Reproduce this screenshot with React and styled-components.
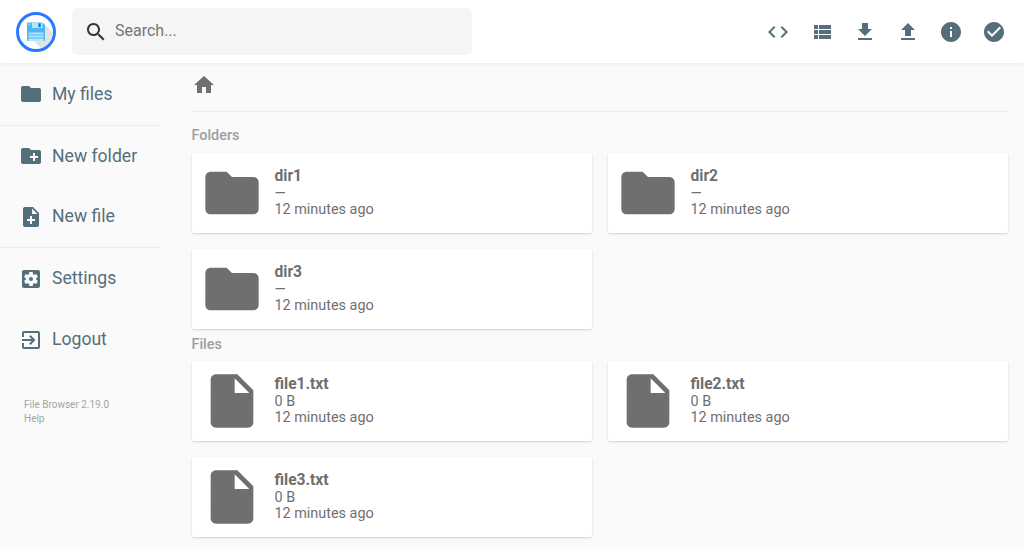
import React from "react";
import styled, { createGlobalStyle } from "styled-components";

const Global = createGlobalStyle`
  html, body { margin: 0; padding: 0; background: #fafafa; overflow: hidden; }
  body { font-family: Roboto, "Noto Sans", sans-serif; color: #546e7a; }
  * { box-sizing: border-box; }
`;

const P = {
  folder: "M10 4H4c-1.1 0-1.99.9-1.99 2L2 18c0 1.1.9 2 2 2h16c1.1 0 2-.9 2-2V8c0-1.1-.9-2-2-2h-8l-2-2z",
  file: "M6 2c-1.1 0-1.99.9-1.99 2L4 20c0 1.1.89 2 1.99 2H18c1.1 0 2-.9 2-2V8l-6-6H6zm7 7V3.5L18.5 9H13z",
  newFolder: "M20 6h-8l-2-2H4c-1.11 0-1.99.89-1.99 2L2 18c0 1.11.89 2 2 2h16c1.11 0 2-.89 2-2V8c0-1.11-.89-2-2-2zm-1 8h-3v3h-2v-3h-3v-2h3V9h2v3h3v2z",
  newFile: "M14 2H6c-1.1 0-1.99.9-1.99 2L4 20c0 1.1.89 2 1.99 2H18c1.1 0 2-.9 2-2V8l-6-6zm2 14h-3v3h-2v-3H8v-2h3v-3h2v3h3v2zm-3-7V3.5L18.5 9H13z",
  settings: "M12 10c-1.1 0-2 .9-2 2s.9 2 2 2 2-.9 2-2-.9-2-2-2zm7-7H5c-1.11 0-2 .9-2 2v14c0 1.1.89 2 2 2h14c1.11 0 2-.9 2-2V5c0-1.1-.89-2-2-2zm-1.75 9c0 .23-.02.46-.05.68l1.48 1.16c.13.11.17.3.08.45l-1.4 2.42c-.09.15-.27.21-.43.15l-1.74-.7c-.36.28-.76.51-1.18.69l-.26 1.85c-.03.17-.18.3-.35.3h-2.8c-.17 0-.32-.13-.35-.29l-.26-1.85c-.43-.18-.82-.41-1.18-.69l-1.74.7c-.16.06-.34 0-.43-.15l-1.4-2.42c-.09-.15-.05-.34.08-.45l1.48-1.16c-.03-.23-.05-.46-.05-.69 0-.23.02-.46.05-.68l-1.48-1.16c-.13-.11-.17-.3-.08-.45l1.4-2.42c.09-.15.27-.21.43-.15l1.74.7c.36-.28.76-.51 1.18-.69l.26-1.85c.03-.17.18-.3.35-.3h2.8c.17 0 .32.13.35.29l.26 1.85c.43.18.82.41 1.18.69l1.74-.7c.16-.06.34 0 .43.15l1.4 2.42c.09.15.05.34-.08.45l-1.48 1.16c.03.23.05.46.05.69z",
  logout: "M10.09 15.59L11.5 17l5-5-5-5-1.41 1.41L12.67 11H3v2h9.67l-2.58 2.59zM19 3H5c-1.11 0-2 .9-2 2v4h2V5h14v14H5v-4H3v4c0 1.1.89 2 2 2h14c1.1 0 2-.9 2-2V5c0-1.1-.9-2-2-2z",
  code: "M9.4 16.6L4.8 12l4.6-4.6L8 6l-6 6 6 6 1.4-1.4zm5.2 0l4.6-4.6-4.6-4.6L16 6l6 6-6 6-1.4-1.4z",
  list: "M4 14h4v-4H4v4zm0 5h4v-4H4v4zM4 9h4V5H4v4zm5 5h12v-4H9v4zm0 5h12v-4H9v4zM9 5v4h12V5H9z",
  download: "M19 9h-4V3H9v6H5l7 7 7-7zM5 18v2h14v-2H5z",
  upload: "M9 16h6v-6h4l-7-7-7 7h4v6zm-4 2h14v2H5z",
  info: "M12 2C6.48 2 2 6.48 2 12s4.48 10 10 10 10-4.48 10-10S17.52 2 12 2zm1 15h-2v-6h2v6zm0-8h-2V7h2v2z",
  check: "M12 2C6.48 2 2 6.48 2 12s4.48 10 10 10 10-4.48 10-10S17.52 2 12 2zm-2 15l-5-5 1.41-1.41L10 14.17l7.59-7.59L19 8l-9 9z",
  home: "M10 20v-6h4v6h5v-8h3L12 3 2 12h3v8z",
  search: "M15.5 14h-.79l-.28-.27C15.41 12.59 16 11.11 16 9.5 16 5.91 13.09 3 9.5 3S3 5.91 3 9.5 5.91 16 9.5 16c1.61 0 3.09-.59 4.23-1.57l.27.28v.79l5 4.99L20.49 19l-4.99-5zm-6 0C7.01 14 5 11.99 5 9.5S7.01 5 9.5 5 14 7.01 14 9.5 11.99 14 9.5 14z",
};

const Svg = styled.svg`
  display: block;
  flex: none;
  width: ${(p) => p.$size || 24}px;
  height: ${(p) => p.$size || 24}px;
  fill: ${(p) => p.$color || "#546e7a"};
`;
const Icon = ({ d, size, color }) => (
  <Svg viewBox="0 0 24 24" $size={size} $color={color}><path d={d} /></Svg>
);

const LogoMark = styled.svg`
  display: block;
  flex: none;
  width: 40px;
  height: 40px;
  margin-top: 1px;
`;
const Logo = () => (
  <LogoMark viewBox="0 0 40 40">
    <circle cx="20" cy="20" r="18.5" fill="#fff" stroke="#2979ff" strokeWidth="3" />
    <path d="M28 12 L36.6 20.5 A17 17 0 0 1 25 36.2 L12 23 Z" fill="#e2e2e2" />
    <path d="M11 10.5h15.5l2.5 2.5V28a1 1 0 0 1-1 1H12a1 1 0 0 1-1-1z" fill="#4db6f5" />
    <rect x="16" y="10.5" width="10.5" height="5.5" fill="#b3e5fc" />
    <rect x="22.5" y="11.3" width="2.2" height="3.8" fill="#0277bd" />
    <rect x="12.6" y="11.6" width="1.2" height="1.2" fill="#e1f5fe" />
    <rect x="12.5" y="20.5" width="15" height="8.5" fill="#b3e5fc" />
    <rect x="12.5" y="22.5" width="15" height="1" fill="#4db6f5" />
    <rect x="12.5" y="25.5" width="15" height="1" fill="#4db6f5" />
  </LogoMark>
);

const Shell = styled.div`
  width: 1024px;
  height: 549px;
  overflow: hidden;
  display: flex;
  flex-direction: column;
`;
const Header = styled.header`
  flex: none;
  height: 63px;
  background: #fff;
  box-shadow: 0 0 5px rgba(0, 0, 0, 0.1);
  display: flex;
  align-items: center;
  padding: 0 8px 0 16px;
  position: relative;
  z-index: 2;
`;
const Search = styled.div`
  width: 400px;
  height: 47px;
  margin-left: 16px;
  background: #f5f5f5;
  border-radius: 5px;
  display: flex;
  align-items: center;
  gap: 7px;
  padding-left: 12px;
  color: #757575;
  font-size: 16px;
`;
const SearchText = styled.span`
  margin-bottom: 2px;
`;
const Actions = styled.div`
  margin-left: auto;
  margin-top: 1px;
  display: flex;
`;
const Action = styled.div`
  width: 43.2px;
  height: 48px;
  display: flex;
  align-items: center;
  justify-content: center;
`;
const Body = styled.div`
  flex: 1;
  display: flex;
  min-height: 0;
`;
const Side = styled.nav`
  flex: none;
  width: 160px;
  margin-right: 32px;
  padding-top: 1px;
`;
const SideItem = styled.div`
  display: flex;
  align-items: center;
  height: ${(p) => p.$h}px;
  padding-bottom: ${(p) => p.$pb || 0}px;
  gap: 9px;
  padding-left: 19px;
  font-size: 17.6px;
  color: #546e7a;
`;
const SideLabel = styled.span`
  margin-bottom: 1px;
`;
const Rule = styled.hr`
  margin: 0;
  border: 0;
  border-top: 1px solid rgba(0, 0, 0, 0.05);
`;
const Credits = styled.div`
  margin: 28px 0 0 24px;
  font-size: 10px;
  line-height: 14px;
  color: #a5a5a5;
`;
const Main = styled.main`
  flex: none;
  width: 816px;
`;
const Crumbs = styled.div`
  height: 49px;
  display: flex;
  align-items: center;
  padding-bottom: 4px;
  border-bottom: 1px solid rgba(0, 0, 0, 0.05);
`;
const Heading = styled.h2`
  margin: 0 0 0 -0.5px;
  height: ${(p) => p.$h}px;
  padding: ${(p) => p.$pad};
  display: flex;
  align-items: center;
  font-size: 14.4px;
  font-weight: 500;
  color: #9e9e9e;
`;
const Grid = styled.div`
  display: grid;
  grid-template-columns: 400px 400px;
  gap: 16px;
`;
const Card = styled.div`
  height: 80px;
  background: #fff;
  border-radius: 2px;
  box-shadow: 0 1px 3px rgba(0, 0, 0, 0.06), 0 1px 2px rgba(0, 0, 0, 0.12);
  display: flex;
  align-items: center;
  padding-left: 8px;
  gap: 10.5px;
  color: #6f6f6f;
`;
const Info = styled.div`
  display: flex;
  flex-direction: column;
  font-size: 14.4px;
  line-height: 16px;
`;
const Name = styled.div`
  font-size: 15.6px;
  font-weight: 700;
  line-height: 17px;
  margin-top: -1px;
  margin-bottom: 1px;
`;

const items = (names, size) => names.map((n) => ({ n, size }));

const Entry = ({ d, n, size }) => (
  <Card>
    <Icon d={d} size={64} color="#6f6f6f" />
    <Info>
      <Name>{n}</Name>
      <div>{size}</div>
      <div>12 minutes ago</div>
    </Info>
  </Card>
);

export default function App() {
  return (
    <Shell>
      <Global />
      <Header>
        <Logo />
        <Search>
          <Icon d={P.search} color="#333" />
          <SearchText>Search...</SearchText>
        </Search>
        <Actions>
          {[P.code, P.list, P.download, P.upload, P.info, P.check].map((d) => (
            <Action key={d}><Icon d={d} /></Action>
          ))}
        </Actions>
      </Header>
      <Body>
        <Side>
          <SideItem $h={61} $pb={1}><Icon d={P.folder} /><SideLabel>My files</SideLabel></SideItem>
          <Rule />
          <SideItem $h={60}><Icon d={P.newFolder} /><SideLabel>New folder</SideLabel></SideItem>
          <SideItem $h={61}><Icon d={P.newFile} /><SideLabel>New file</SideLabel></SideItem>
          <Rule />
          <SideItem $h={61}><Icon d={P.settings} /><SideLabel>Settings</SideLabel></SideItem>
          <SideItem $h={61}><Icon d={P.logout} /><SideLabel>Logout</SideLabel></SideItem>
          <Credits>File Browser 2.19.0<br />Help</Credits>
        </Side>
        <Main>
          <Crumbs><Icon d={P.home} color="#6f6f6f" /></Crumbs>
          <Heading $h={41} $pad="6px 0 0">Folders</Heading>
          <Grid>
            {items(["dir1", "dir2", "dir3"], "—").map((e) => <Entry key={e.n} d={P.folder} {...e} />)}
          </Grid>
          <Heading $h={32} $pad="0 0 2px">Files</Heading>
          <Grid>
            {items(["file1.txt", "file2.txt", "file3.txt"], "0 B").map((e) => <Entry key={e.n} d={P.file} {...e} />)}
          </Grid>
        </Main>
      </Body>
    </Shell>
  );
}
